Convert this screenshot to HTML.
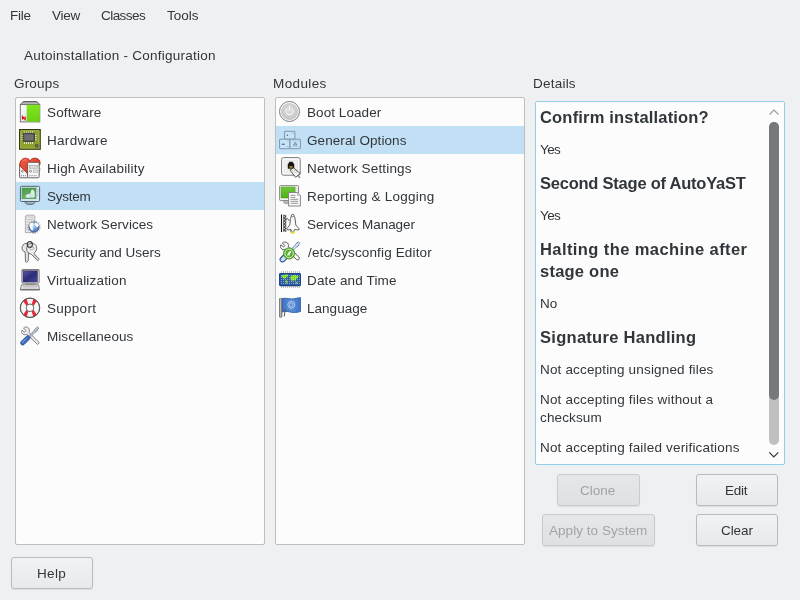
<!DOCTYPE html>
<html><head><meta charset="utf-8">
<style>
html,body{margin:0;padding:0;width:800px;height:600px;overflow:hidden;background:#eff0f1;}
body{position:relative;font-family:"Liberation Sans",sans-serif;color:#31363b;}
.t{position:absolute;white-space:nowrap;line-height:1;font-size:13.5px;will-change:transform;}
.box{position:absolute;box-sizing:border-box;background:#fcfcfc;border:1px solid #bdbebf;border-radius:2px;}
.sel{position:absolute;background:#c2e0f5;}
.ic{position:absolute;width:22px;height:22px;}
.btn{position:absolute;box-sizing:border-box;border:1px solid #b9babb;border-radius:3px;background:linear-gradient(#f1f2f3,#e8e9ea);box-shadow:0 1px 1px rgba(0,0,0,0.08);}
.btn span{will-change:transform;position:absolute;white-space:nowrap;line-height:1;font-size:13.5px;}
.dis{background:linear-gradient(#e6e7e8,#dfe0e1);border-color:#c9cacb;}
.dis span{color:#a2a4a6;}
.h{font-weight:bold;font-size:16.5px;}
</style></head><body>
<!-- menu -->
<div id="m_file" class="t" style="left:10.32px;top:9px;letter-spacing:-0.274px">File</div>
<div id="m_view" class="t" style="left:51.90px;top:9px;letter-spacing:-0.277px">View</div>
<div id="m_classes" class="t" style="left:101.32px;top:9px;letter-spacing:-0.56px">Classes</div>
<div id="m_tools" class="t" style="left:167.20px;top:9px;letter-spacing:0.000px">Tools</div>
<div id="title" class="t" style="left:23.81px;top:49px;letter-spacing:0.245px">Autoinstallation - Configuration</div>
<div id="l_groups" class="t" style="left:14.00px;top:77px;letter-spacing:0.188px">Groups</div>
<div id="l_modules" class="t" style="left:273.15px;top:77px;letter-spacing:0.391px">Modules</div>
<div id="l_details" class="t" style="left:533.15px;top:77px;letter-spacing:0.224px">Details</div>

<div class="box" style="left:15px;top:97px;width:250px;height:448px"></div>
<div class="sel" style="left:16px;top:182px;width:248px;height:28px"></div>
<div class="box" style="left:275px;top:97px;width:250px;height:448px"></div>
<div class="sel" style="left:276px;top:126px;width:248px;height:28px"></div>
<div class="box" style="left:535px;top:101px;width:250px;height:364px;border-color:#93cee9"></div>

<div id="g0" class="t" style="left:47.15px;top:106px;letter-spacing:0.143px">Software</div>
<div id="g1" class="t" style="left:47.15px;top:134px;letter-spacing:0.300px">Hardware</div>
<div id="g2" class="t" style="left:47.15px;top:162px;letter-spacing:0.197px">High Availability</div>
<div id="g3" class="t" style="left:47.15px;top:190px;letter-spacing:-0.24px">System</div>
<div id="g4" class="t" style="left:47.15px;top:218px;letter-spacing:0.073px">Network Services</div>
<div id="g5" class="t" style="left:47.15px;top:246px;letter-spacing:-0.018px">Security and Users</div>
<div id="g6" class="t" style="left:47.15px;top:274px;letter-spacing:0.190px">Virtualization</div>
<div id="g7" class="t" style="left:47.15px;top:302px;letter-spacing:0.274px">Support</div>
<div id="g8" class="t" style="left:47.15px;top:330px;letter-spacing:0.06px">Miscellaneous</div>

<div id="md0" class="t" style="left:307.00px;top:106px;letter-spacing:0.065px">Boot Loader</div>
<div id="md1" class="t" style="left:307.00px;top:134px;letter-spacing:0.079px">General Options</div>
<div id="md2" class="t" style="left:307.00px;top:162px;letter-spacing:0.167px">Network Settings</div>
<div id="md3" class="t" style="left:307.00px;top:190px;letter-spacing:0.230px">Reporting &amp; Logging</div>
<div id="md4" class="t" style="left:307.00px;top:218px;letter-spacing:-0.054px">Services Manager</div>
<div id="md5" class="t" style="left:307.68px;top:246px;letter-spacing:0.145px">/etc/sysconfig Editor</div>
<div id="md6" class="t" style="left:307.00px;top:274px;letter-spacing:0.138px">Date and Time</div>
<div id="md7" class="t" style="left:307.00px;top:302px;letter-spacing:0.028px">Language</div>

<div id="d0" class="t h" style="left:540.32px;top:109px;letter-spacing:0.185px">Confirm installation?</div>
<div id="d1" class="t" style="left:540.32px;top:143px;letter-spacing:-0.590px">Yes</div>
<div id="d2" class="t h" style="left:540.32px;top:175px;letter-spacing:-0.230px">Second Stage of AutoYaST</div>
<div id="d3" class="t" style="left:540.32px;top:209px;letter-spacing:-0.590px">Yes</div>
<div id="d4" class="t h" style="left:540.32px;top:241px;letter-spacing:0.412px">Halting the machine after</div>
<div id="d5" class="t h" style="left:540.32px;top:263px;letter-spacing:0.237px">stage one</div>
<div id="d6" class="t" style="left:540.32px;top:297px;letter-spacing:0.0px">No</div>
<div id="d7" class="t h" style="left:540.32px;top:329px;letter-spacing:0.282px">Signature Handling</div>
<div id="d8" class="t" style="left:540.32px;top:363px;letter-spacing:0.166px">Not accepting unsigned files</div>
<div id="d9" class="t" style="left:540.32px;top:393px;letter-spacing:0.178px">Not accepting files without a</div>
<div id="d10" class="t" style="left:540.32px;top:411px;letter-spacing:0.129px">checksum</div>
<div id="d11" class="t" style="left:540.32px;top:441px;letter-spacing:0.176px">Not accepting failed verifications</div>

<!-- scrollbar -->
<div style="position:absolute;left:769px;top:122px;width:10px;height:323px;border-radius:5px;background:#bfc0c1"></div>
<div style="position:absolute;left:769px;top:122px;width:10px;height:278px;border-radius:5px;background:#76797c"></div>

<div class="btn dis" style="left:557px;top:474px;width:83px;height:32px"><span id="b_clone" style="left:22.10px;top:9px;letter-spacing:0.015px">Clone</span></div>
<div class="btn dis" style="left:542px;top:514px;width:113px;height:32px"><span id="b_apply" style="left:6.08px;top:9px;letter-spacing:0.050px">Apply to System</span></div>
<div class="btn" style="left:696px;top:474px;width:82px;height:32px"><span id="b_edit" style="left:28.20px;top:9px;letter-spacing:-0.216px">Edit</span></div>
<div class="btn" style="left:696px;top:514px;width:82px;height:32px"><span id="b_clear" style="left:23.80px;top:9px;letter-spacing:-0.086px">Clear</span></div>
<div class="btn" style="left:11px;top:557px;width:82px;height:32px"><span id="b_help" style="left:25.10px;top:9px;letter-spacing:0.335px">Help</span></div>
<!-- scroll arrows -->
<svg style="position:absolute;left:764px;top:104px" width="20" height="16" viewBox="0 0 20 16"><path d="M5.5 10.5 L10 6 L14.5 10.5" fill="none" stroke="#9a9c9e" stroke-width="1.1"/></svg>
<svg style="position:absolute;left:764px;top:446px" width="20" height="16" viewBox="0 0 20 16"><path d="M5.3 6.3 L9.8 10.8 L14.3 6.3" fill="none" stroke="#31363b" stroke-width="1.2"/></svg>

<!-- group icons -->
<!-- Software -->
<svg class="ic" style="left:19px;top:101px" viewBox="0 0 22 22">
 <defs><linearGradient id="sw_top" x1="0" y1="0" x2="0" y2="1"><stop offset="0" stop-color="#8c8c8c"/><stop offset="1" stop-color="#cfcfcf"/></linearGradient>
 <linearGradient id="sw_l" x1="0" y1="0" x2="1" y2="1"><stop offset="0" stop-color="#ffffff"/><stop offset="1" stop-color="#d6d6d6"/></linearGradient>
 <linearGradient id="sw_g" x1="0" y1="0" x2="0" y2="1"><stop offset="0" stop-color="#7ee81c"/><stop offset="1" stop-color="#6cd015"/></linearGradient></defs>
 <path d="M4.3 0.5 H17.8 L20.8 3.6 H1.3 Z" fill="url(#sw_top)" stroke="#555" stroke-width="0.9"/>
 <rect x="1.3" y="3.6" width="19.5" height="17.3" fill="url(#sw_l)" stroke="#6a6a6a" stroke-width="0.9"/>
 <rect x="7.7" y="3.8" width="13" height="16.9" fill="url(#sw_g)"/>
 <path d="M3.4 18.5 V15.5 L6.2 18.5 V15.5" fill="none" stroke="#e01010" stroke-width="1.1"/>
</svg>
<!-- Hardware -->
<svg class="ic" style="left:19px;top:129px" viewBox="0 0 22 22">
 <rect x="0.6" y="0.6" width="20.6" height="19.6" fill="#8aa12c" stroke="#353a0c" stroke-width="1.2"/>
 <rect x="1.8" y="1.8" width="18.2" height="17.2" fill="none" stroke="#b3c56a" stroke-width="0.6"/>
 <g stroke="#e8e8e8" stroke-width="0.9">
  <path d="M5.5 2.5 V5 M7.5 2.5 V5 M9.5 2.5 V5 M11.5 2.5 V5 M13.5 2.5 V5"/>
  <path d="M5.5 12 V15 M7.5 12 V15 M9.5 12 V15 M11.5 12 V15 M13.5 12 V15"/>
  <path d="M2.5 6.5 H5 M2.5 8.5 H5 M2.5 10.5 H5 M14 6.5 H17.5 M14 8.5 H17.5 M14 10.5 H17.5"/>
 </g>
 <rect x="4.2" y="4.3" width="11.3" height="8.2" rx="1" fill="#5a5a5a" stroke="#2e2e2e" stroke-width="0.8"/>
 <rect x="5.6" y="5.6" width="8.5" height="5.6" fill="#6e6e6e"/>
 <circle cx="17.8" cy="16.8" r="1.6" fill="#6a6a6a" stroke="#3a3a3a" stroke-width="0.6"/>
</svg>
<!-- High Availability -->
<svg class="ic" style="left:19px;top:157px" viewBox="0 0 22 22">
 <defs><linearGradient id="ha_r" x1="0" y1="0" x2="1" y2="1"><stop offset="0" stop-color="#f06048"/><stop offset="1" stop-color="#d42a14"/></linearGradient></defs>
 <rect x="0.6" y="6.8" width="8.4" height="14" rx="0.8" fill="#f4f4f4" stroke="#555" stroke-width="0.9"/>
 <circle cx="3.3" cy="14.2" r="0.9" fill="none" stroke="#666" stroke-width="0.7"/>
 <path d="M2.5 18 v1.2 M4.5 18 v1.2 M6.5 18 v1.2" stroke="#777" stroke-width="0.8"/>
 <path d="M11 3.6 C9.2 1 5.5 0.6 3.3 2.3 C0.6 4.5 0.4 7.8 1.6 9.6 L8.6 16.8 L15 10 L20.8 8 C21.6 5.5 20.8 3 19 2 C16.8 0.6 13 0.8 11 3.6 Z" fill="url(#ha_r)" stroke="#a81208" stroke-width="0.8"/>
 <path d="M4 3.5 C5 2.8 6.5 2.7 7.5 3.2" stroke="#f8a090" stroke-width="0.8" fill="none"/>
 <rect x="8.6" y="5.3" width="11.6" height="15.5" rx="1.2" fill="#f6f6f6" stroke="#555" stroke-width="0.9"/>
 <rect x="10.6" y="8.4" width="8" height="2.8" fill="#dcdcdc" stroke="#9a9a9a" stroke-width="0.6"/>
 <circle cx="11.5" cy="14.2" r="1" fill="none" stroke="#666" stroke-width="0.7"/>
 <rect x="14.4" y="13" width="4.2" height="2.3" fill="#e4e4e4" stroke="#999" stroke-width="0.5"/>
 <path d="M11 18 v1.2 M13 18 v1.2 M15 18 v1.2 M17 18 v1.2" stroke="#777" stroke-width="0.8"/>
 <path d="M20.6 11.5 h0.8 M20.6 13.3 h0.8" stroke="#555" stroke-width="0.6"/>
</svg>
<!-- System -->
<svg class="ic" style="left:19px;top:185px" viewBox="0 0 22 22">
 <defs><linearGradient id="sy_s" x1="0" y1="0" x2="0" y2="1"><stop offset="0" stop-color="#4d9e4d"/><stop offset="1" stop-color="#67b565"/></linearGradient>
 <linearGradient id="sy_st" x1="0" y1="0" x2="0" y2="1"><stop offset="0" stop-color="#b8ccd6"/><stop offset="1" stop-color="#7f9aa8"/></linearGradient></defs>
 <path d="M6 16 H15.8 V17 C15.8 18.8 13.8 19.5 10.9 19.5 C8 19.5 6 18.8 6 17 Z" fill="url(#sy_st)" stroke="#4a5f6a" stroke-width="0.8"/>
 <rect x="1.4" y="1.3" width="19.2" height="15.2" rx="1.2" fill="#d6e6ee" stroke="#4d6472" stroke-width="1"/>
 <rect x="3" y="3" width="14" height="10.8" fill="url(#sy_s)" stroke="#3d7a3d" stroke-width="0.4"/>
 <path d="M6.6 11.2 C7 10 7.8 9.2 9.5 9.1 C10.8 9 11.5 8.4 11.8 7.5 C12 6 12.4 4.8 13.3 4.6 C14.3 4.8 15.2 5.8 15.5 6.8 L15.8 11 C15.5 12 14.8 12.6 14 12.6 L8 12.7 C7 12.6 6.6 12 6.6 11.2 Z" fill="#e4eef4" opacity="0.95"/>
 <path d="M10 11 L13 9 M11.5 12 L14.5 10" stroke="#a8c0cc" stroke-width="0.5"/>
 <path d="M18.7 4 v0.7 M18.7 6 v0.7 M18.7 8 v0.7 M18.7 10 v0.7" stroke="#6c8290" stroke-width="0.7"/>
</svg>
<!-- Network Services -->
<svg class="ic" style="left:19px;top:213px" viewBox="0 0 22 22">
 <defs><radialGradient id="ns_g" cx="0.4" cy="0.3" r="0.75"><stop offset="0" stop-color="#d8e8f8"/><stop offset="0.55" stop-color="#7aa6dc"/><stop offset="1" stop-color="#3564ae"/></radialGradient></defs>
 <path d="M6.4 19.6 V3.2 L7.2 2.2 H15 L15.8 3.2 V19.6 Z" fill="#e6e6e6" stroke="#a0a0a0" stroke-width="0.8"/>
 <path d="M7 4 H15.2" stroke="#c4c4c4" stroke-width="0.8"/>
 <path d="M7.5 6.5 H14 M7.5 9 H11 M7.5 11.5 H10 M7.5 14 H10 M7.5 16.5 H10" stroke="#bdbdbd" stroke-width="0.7"/>
 <circle cx="15" cy="14" r="6.1" fill="none" stroke="#8a94a4" stroke-width="1.2" stroke-dasharray="1.1 1.4" opacity="0.75"/>
 <circle cx="15" cy="14" r="5.1" fill="url(#ns_g)" stroke="#263e78" stroke-width="0.7"/>
 <path d="M10.2 12 C10.8 10.5 12.5 9.3 14.2 9.6 C14.6 10.8 13.6 12 13.4 13 C14 14.5 14.2 16 13.5 17.8 C12.2 17.2 11.3 15.5 11 14.3 Z M15.8 9.5 C17.3 9.2 19 10.3 19.8 12 C19.6 13.6 18.6 14.3 17.6 14 C16.8 13 16 11.5 15.8 9.5 Z" fill="#ffffff"/>
</svg>
<!-- Security and Users -->
<svg class="ic" style="left:19px;top:241px" viewBox="0 0 22 22">
 <path d="M6.2 11 C3.5 10.5 2.5 8 3.2 5.5 C4 3 6.5 1.8 8.8 2.4 L9.5 10.5 L9.2 20 L7.8 21.3 L6.5 20.5 Z" fill="#e8e8e8" stroke="#5c5c5c" stroke-width="0.9"/>
 <path d="M8.5 10.8 C7 8.5 7.5 5 10 3.2 C12.5 1.8 16.5 2.2 17.5 5.5 C18.3 8.5 16.5 11.5 14.8 12.4 L20.3 18.2 L18.8 19.6 L12.2 13.2 C10.5 13 9.3 12 8.5 10.8 Z" fill="#ececec" stroke="#5c5c5c" stroke-width="0.9"/>
 <ellipse cx="12.7" cy="7.2" rx="2.2" ry="1.3" fill="#fff" stroke="#777" stroke-width="0.6"/>
 <ellipse cx="10.8" cy="3.4" rx="2.6" ry="2.8" fill="none" stroke="#3a3a3a" stroke-width="1.1"/>
 <path d="M14.5 14 L16 15.5 M16.5 16 L17.5 17" stroke="#aaa" stroke-width="0.8"/>
</svg>
<!-- Virtualization -->
<svg class="ic" style="left:19px;top:269px" viewBox="0 0 22 22">
 <defs><linearGradient id="vi_s" x1="0" y1="0" x2="1" y2="1"><stop offset="0" stop-color="#5a5aa8"/><stop offset="0.5" stop-color="#2c2c78"/><stop offset="1" stop-color="#4a4a96"/></linearGradient></defs>
 <rect x="2.9" y="0.6" width="17.2" height="13.6" rx="0.8" fill="#f0f0f0" stroke="#6a6a6a" stroke-width="0.9"/>
 <rect x="2.9" y="0.5" width="17.2" height="1.2" fill="#777"/>
 <rect x="4" y="2" width="14.5" height="11" fill="url(#vi_s)" stroke="#1e1e66" stroke-width="0.4"/>
 <rect x="7.2" y="14.2" width="8.5" height="1.4" fill="#bdbdbd" stroke="#777" stroke-width="0.5"/>
 <path d="M2.5 15.8 H19.5 L20.6 20.6 H1.3 Z" fill="#e4e4e4" stroke="#6a6a6a" stroke-width="0.8"/>
 <rect x="1.3" y="20.2" width="19.3" height="1.2" fill="#6a6a6a"/>
 <path d="M4 17.5 H18 M3.5 19 H18.5" stroke="#b0b0b0" stroke-width="0.6"/>
</svg>
<!-- Support -->
<svg class="ic" style="left:19px;top:297px" viewBox="0 0 22 22">
 <circle cx="11" cy="10.8" r="9.7" fill="#f6f6f6" stroke="#555" stroke-width="0.9"/>
 <g fill="#e8243a">
  <path d="M4.1 3.9 A9.7 9.7 0 0 1 7.5 1.7 L9.3 7.2 A3.8 3.8 0 0 0 7.6 8.9 Z"/>
  <path d="M14.5 1.7 A9.7 9.7 0 0 1 17.9 3.9 L14.4 8.9 A3.8 3.8 0 0 0 12.7 7.2 Z"/>
  <path d="M17.9 17.7 A9.7 9.7 0 0 1 14.5 19.9 L12.7 14.4 A3.8 3.8 0 0 0 14.4 12.7 Z"/>
  <path d="M7.5 19.9 A9.7 9.7 0 0 1 4.1 17.7 L7.6 12.7 A3.8 3.8 0 0 0 9.3 14.4 Z"/>
 </g>
 <circle cx="11" cy="10.8" r="9.7" fill="none" stroke="#555" stroke-width="0.9"/>
 <circle cx="11" cy="10.8" r="3.8" fill="#fcfcfc" stroke="#555" stroke-width="0.9"/>
</svg>
<!-- Miscellaneous -->
<svg class="ic" style="left:19px;top:325px" viewBox="0 0 22 22">
 <path d="M9.5 3 C8 1.5 5.5 1.8 4.5 3 L6.8 5.5 L5.5 7.2 L3 5 C2 6.8 2.8 9 5 9.7 C6.3 10 7.3 9.7 8 9.3 L18.5 19.5 L20.3 17.7 L10 7.5 C10.6 6 10.5 4.2 9.5 3 Z" fill="#ececec" stroke="#6a6a6a" stroke-width="0.8"/>
 <path d="M19.8 3 L18.5 1.8 L15.5 4.5 L14.8 6 L9.2 11.5 L10.6 12.9 L16 7.2 L17.6 6.5 Z" fill="#b8c4d0" stroke="#6a7a8a" stroke-width="0.7"/>
 <path d="M9.6 11 C8.8 10.4 8 10.6 7.5 11.2 L2.2 16.5 C1.4 17.3 1.5 18.7 2.3 19.5 C3 20.2 4.3 20.3 5.1 19.5 L10.4 14.2 C11 13.6 11.2 12.8 10.6 12 Z" fill="#3d6ab8" stroke="#24478a" stroke-width="0.8"/>
 <path d="M3 18 L7.5 13.5" stroke="#9cb8e8" stroke-width="0.8"/>
</svg>
<!-- module icons -->
<!-- Boot Loader -->
<svg class="ic" style="left:279px;top:101px" viewBox="0 0 22 22">
 <defs><radialGradient id="bl_g" cx="0.5" cy="0.4" r="0.6"><stop offset="0" stop-color="#dedede"/><stop offset="1" stop-color="#c4c4c4"/></radialGradient></defs>
 <circle cx="10.5" cy="10.5" r="10" fill="#fafafa" stroke="#6e6e6e" stroke-width="0.9"/>
 <circle cx="10.5" cy="10.5" r="8.6" fill="url(#bl_g)"/>
 <path d="M8.3 7.3 A3.6 3.6 0 1 0 12.7 7.3" fill="none" stroke="#fff" stroke-width="1"/>
 <path d="M10.5 5 V9.5" stroke="#fff" stroke-width="1"/>
</svg>
<!-- General Options -->
<svg class="ic" style="left:279px;top:129px" viewBox="0 0 22 22">
 <g fill="#c8e4f6" stroke="#6e8fa5" stroke-width="0.9">
  <rect x="5.5" y="2.3" width="10.4" height="7.9" rx="0.5"/>
  <rect x="0.6" y="10.2" width="10.4" height="9.5" rx="0.5"/>
  <rect x="11" y="10.2" width="10.4" height="9.5" rx="0.5"/>
 </g>
 <circle cx="8.4" cy="6.3" r="0.8" fill="#4e6a7e"/>
 <ellipse cx="4.3" cy="15.2" rx="1.8" ry="0.8" fill="#5a7488"/>
 <path d="M14.5 16 L16.3 13.3 L18 16 Z" fill="none" stroke="#5a7488" stroke-width="0.8"/>
 <path d="M7.5 12 H10 M6.5 17.5 H10 M13 12 H20 M13 17.5 H20 M12 4.5 H15" stroke="#9fbcd0" stroke-width="0.6"/>
</svg>
<!-- Network Settings -->
<svg class="ic" style="left:279px;top:157px" viewBox="0 0 22 22">
 <rect x="2.6" y="0.6" width="18.6" height="17.6" rx="2" fill="#fbfbfb" stroke="#6c6c6c" stroke-width="0.9"/>
 <rect x="5.2" y="3.2" width="13.4" height="12.4" fill="#f0f0f0" stroke="#e2e2e2" stroke-width="0.6"/>
 <path d="M9 11.6 V7.2 L10.2 5.8 V5 H13.8 V5.8 L15 7.2 V11.6 Z" fill="#141414" stroke="#222" stroke-width="0.5"/>
 <path d="M11.2 9 V10.8 M12.9 9 V10.8" stroke="#f2d21a" stroke-width="1"/>
 <path d="M11 13.1 L14.7 10.9 L21.3 16.6 L16.6 20.3 Z" fill="#f2f2f2" stroke="#2e2e2e" stroke-width="0.8"/>
 <path d="M12.5 13.5 L15 11.8" stroke="#f0d040" stroke-width="0.9"/>
 <path d="M14.5 14.5 L17.5 12.5 M16 16 L19 14" stroke="#9a9a9a" stroke-width="0.6"/>
 <path d="M19 18.5 L21 21" stroke="#666" stroke-width="1.1"/>
</svg>
<!-- Reporting & Logging -->
<svg class="ic" style="left:279px;top:185px" viewBox="0 0 22 22">
 <defs><linearGradient id="rl_s" x1="0" y1="0" x2="0" y2="1"><stop offset="0" stop-color="#6cc93a"/><stop offset="1" stop-color="#4fb010"/></linearGradient></defs>
 <ellipse cx="8.5" cy="17" rx="4" ry="1.8" fill="#bcbcbc" stroke="#888" stroke-width="0.6"/>
 <rect x="0.6" y="0.6" width="19" height="15" rx="1" fill="#f2f2f2" stroke="#7a7a7a" stroke-width="0.9"/>
 <rect x="2" y="2" width="14.2" height="11" rx="0.5" fill="url(#rl_s)" stroke="#3e8a10" stroke-width="0.4"/>
 <path d="M18 3 v0.6 M18 5 v0.6" stroke="#999" stroke-width="0.6"/>
 <path d="M9.6 7.5 H18.5 L21.4 10.4 V21 H9.6 Z" fill="#fbfbfb" stroke="#7a7a7a" stroke-width="0.9"/>
 <path d="M18.5 7.5 V10.4 H21.4" fill="#e2e2e2" stroke="#9a9a9a" stroke-width="0.6"/>
 <path d="M11.5 10.3 H16.5 M11.5 12.3 H16.5 M11.5 14.3 H19.3 M11.5 16.3 H19.3 M11.5 18.3 H19.3" stroke="#7c7c7c" stroke-width="0.8"/>
</svg>
<!-- Services Manager -->
<svg class="ic" style="left:279px;top:213px" viewBox="0 0 22 22">
 <path d="M2.5 1.5 V19" stroke="#111" stroke-width="1.1"/>
 <path d="M4.7 1.8 V19 M6.8 1.8 V19" stroke="#333" stroke-width="0.7"/>
 <path d="M4.7 2 L6.8 3.5 L4.7 5 L6.8 6.5 L4.7 8 L6.8 9.5 L4.7 11 L6.8 12.5 L4.7 14 L6.8 15.5 L4.7 17 L6.8 18.5" fill="none" stroke="#222" stroke-width="0.8"/>
 <path d="M6.8 6.5 L8.5 5.5 L10.5 8" fill="none" stroke="#333" stroke-width="0.8"/>
 <path d="M13.6 1 C12.8 2 12.2 3 11.5 5.5 L10.8 12 L8 15.5 L8.6 17 L12 16.5 L12.5 18.5 L15 18.5 L15.5 16.5 L19.8 17 L20.2 15.8 L16.8 12 L16 5 C15.3 3 14.5 2 13.6 1 Z" fill="#f8f8f8" stroke="#3c3c3c" stroke-width="0.8"/>
 <circle cx="13.6" cy="2.6" r="1.2" fill="#fff" stroke="#333" stroke-width="0.6"/>
 <ellipse cx="13.8" cy="19.5" rx="2.2" ry="1.2" fill="#e8e020"/>
 <path d="M11.2 16.8 L12.2 19.5" stroke="#8a8aa0" stroke-width="1"/>
 <path d="M8.5 15.8 L10 14.2" stroke="#a8e0f0" stroke-width="0.9"/>
</svg>
<!-- /etc/sysconfig Editor -->
<svg class="ic" style="left:279px;top:241px" viewBox="0 0 22 22">
 <path d="M8.5 2 C7 0.6 4.5 0.8 3.3 2 L5.8 4.5 L4.5 6 L1.8 3.8 C0.8 5.8 1.8 8 4 8.6 C5.2 8.9 6.2 8.6 7 8.2 L17.5 18.5 C18.3 19.2 19.5 19 20 18.3 C20.6 17.5 20.4 16.5 19.7 15.8 L9.3 5.8 C9.6 4.5 9.5 3 8.5 2 Z" fill="#fafafa" stroke="#3a3a3a" stroke-width="0.8"/>
 <path d="M20.5 1.8 L19.2 0.8 L16.8 3 L16 4.5 L9.5 11 L11 12.5 L17.5 6 L19 5.2 Z" fill="#d8e6f2" stroke="#1f4e9a" stroke-width="0.9" stroke-dasharray="1.2 0.6"/>
 <path d="M7 14 C6.2 13.3 5.2 13.4 4.6 14 L1.7 17 C0.8 17.9 0.9 19.3 1.8 20.2 C2.7 21.1 4.1 21.2 5 20.3 L8 17.3 C8.6 16.7 8.7 15.7 8 15 Z" fill="#d0dff0" stroke="#1f4a98" stroke-width="1.1"/>
 <circle cx="10.1" cy="12.4" r="5.7" fill="#4ea820" stroke="#3b8a14" stroke-width="0.6"/>
 <circle cx="10.1" cy="12.4" r="4.3" fill="#56b02a" stroke="#ffffff" stroke-width="0.8"/>
 <path d="M8 14.5 C8.5 12.5 9.5 11 10.8 10.2 C11.8 9.6 12.5 10.5 12 11.5 C11.2 12.5 10.5 13.5 10.5 14.5 Z" fill="#fff" opacity="0.9"/>
</svg>
<!-- Date and Time -->
<svg class="ic" style="left:279px;top:269px" viewBox="0 0 22 22">
 <g fill="#c9c2bc"><rect x="2" y="2" width="1" height="2"/><rect x="4" y="2" width="1" height="2"/><rect x="6" y="2" width="1" height="2"/><rect x="8" y="2" width="1" height="2"/><rect x="10" y="2" width="1" height="2"/><rect x="12" y="2" width="1" height="2"/><rect x="14" y="2" width="1" height="2"/><rect x="16" y="2" width="1" height="2"/><rect x="18" y="2" width="1" height="2"/><rect x="20" y="2" width="1" height="2"/><rect x="2" y="17" width="1" height="2"/><rect x="4" y="17" width="1" height="2"/><rect x="6" y="17" width="1" height="2"/><rect x="8" y="17" width="1" height="2"/><rect x="10" y="17" width="1" height="2"/><rect x="12" y="17" width="1" height="2"/><rect x="14" y="17" width="1" height="2"/><rect x="16" y="17" width="1" height="2"/><rect x="18" y="17" width="1" height="2"/><rect x="20" y="17" width="1" height="2"/></g>
 <rect x="0.6" y="4.6" width="20.8" height="12" rx="0.8" fill="#2d5aa4" stroke="#1b4590" stroke-width="1.2"/>
 <path d="M2 7 C3 6 5 6 6 5.8 L8 5.2 L9.5 6.3 L8 8 L6.5 9 L6 10.5 L5 9.5 L3.5 8.5 Z M6.5 11 L8 11.5 L8.5 13.5 L7.5 15 L6.8 13.5 Z M11 8 L13 6.5 L16 6 L19.5 7 L19 9 L17 10 L16.5 12 L14.5 11 L13 12.5 L11.8 10.5 Z M16.5 13.5 L18.3 12.8 L18.5 14.5 L17 15 Z" fill="#7ad91c"/>
 <g fill="#ffffff" opacity="0.45"><rect x="2" y="6" width="1" height="1"/><rect x="4" y="6" width="1" height="1"/><rect x="6" y="6" width="1" height="1"/><rect x="8" y="6" width="1" height="1"/><rect x="10" y="6" width="1" height="1"/><rect x="12" y="6" width="1" height="1"/><rect x="14" y="6" width="1" height="1"/><rect x="16" y="6" width="1" height="1"/><rect x="18" y="6" width="1" height="1"/><rect x="20" y="6" width="1" height="1"/><rect x="2" y="8" width="1" height="1"/><rect x="4" y="8" width="1" height="1"/><rect x="6" y="8" width="1" height="1"/><rect x="8" y="8" width="1" height="1"/><rect x="10" y="8" width="1" height="1"/><rect x="12" y="8" width="1" height="1"/><rect x="14" y="8" width="1" height="1"/><rect x="16" y="8" width="1" height="1"/><rect x="18" y="8" width="1" height="1"/><rect x="20" y="8" width="1" height="1"/><rect x="2" y="10" width="1" height="1"/><rect x="4" y="10" width="1" height="1"/><rect x="6" y="10" width="1" height="1"/><rect x="8" y="10" width="1" height="1"/><rect x="10" y="10" width="1" height="1"/><rect x="12" y="10" width="1" height="1"/><rect x="14" y="10" width="1" height="1"/><rect x="16" y="10" width="1" height="1"/><rect x="18" y="10" width="1" height="1"/><rect x="20" y="10" width="1" height="1"/><rect x="2" y="12" width="1" height="1"/><rect x="4" y="12" width="1" height="1"/><rect x="6" y="12" width="1" height="1"/><rect x="8" y="12" width="1" height="1"/><rect x="10" y="12" width="1" height="1"/><rect x="12" y="12" width="1" height="1"/><rect x="14" y="12" width="1" height="1"/><rect x="16" y="12" width="1" height="1"/><rect x="18" y="12" width="1" height="1"/><rect x="20" y="12" width="1" height="1"/><rect x="2" y="14" width="1" height="1"/><rect x="4" y="14" width="1" height="1"/><rect x="6" y="14" width="1" height="1"/><rect x="8" y="14" width="1" height="1"/><rect x="10" y="14" width="1" height="1"/><rect x="12" y="14" width="1" height="1"/><rect x="14" y="14" width="1" height="1"/><rect x="16" y="14" width="1" height="1"/><rect x="18" y="14" width="1" height="1"/><rect x="20" y="14" width="1" height="1"/></g>
</svg>
<!-- Language -->
<svg class="ic" style="left:279px;top:297px" viewBox="0 0 22 22">
 <defs><linearGradient id="la_f" x1="0" y1="0" x2="1" y2="0"><stop offset="0" stop-color="#3d72c4"/><stop offset="0.5" stop-color="#5a8fd6"/><stop offset="1" stop-color="#3f74c6"/></linearGradient>
 <linearGradient id="la_p" x1="0" y1="0" x2="1" y2="0"><stop offset="0" stop-color="#555"/><stop offset="0.5" stop-color="#ccc"/><stop offset="1" stop-color="#666"/></linearGradient></defs>
 <path d="M3 1.5 C7 0.5 11 2.5 15 1.8 C17.5 1.4 19.5 0.8 21.5 0.6 V14.5 C18.5 15.5 15 16 11 15 C8 14.3 5.5 14.2 3 15 Z" fill="url(#la_f)" stroke="#2a5aa8" stroke-width="0.8"/>
 <circle cx="12.3" cy="7.8" r="3.5" fill="none" stroke="#dce8f6" stroke-width="0.7"/>
 <circle cx="12.3" cy="7.8" r="1.8" fill="none" stroke="#dce8f6" stroke-width="0.6"/>
 <rect x="0.4" y="1.2" width="2.6" height="19.2" rx="1" fill="url(#la_p)" stroke="#5a5a5a" stroke-width="0.5"/>
 <path d="M6.3 12 L5.2 19.5" stroke="#555" stroke-width="1"/>
</svg>
</body></html>
